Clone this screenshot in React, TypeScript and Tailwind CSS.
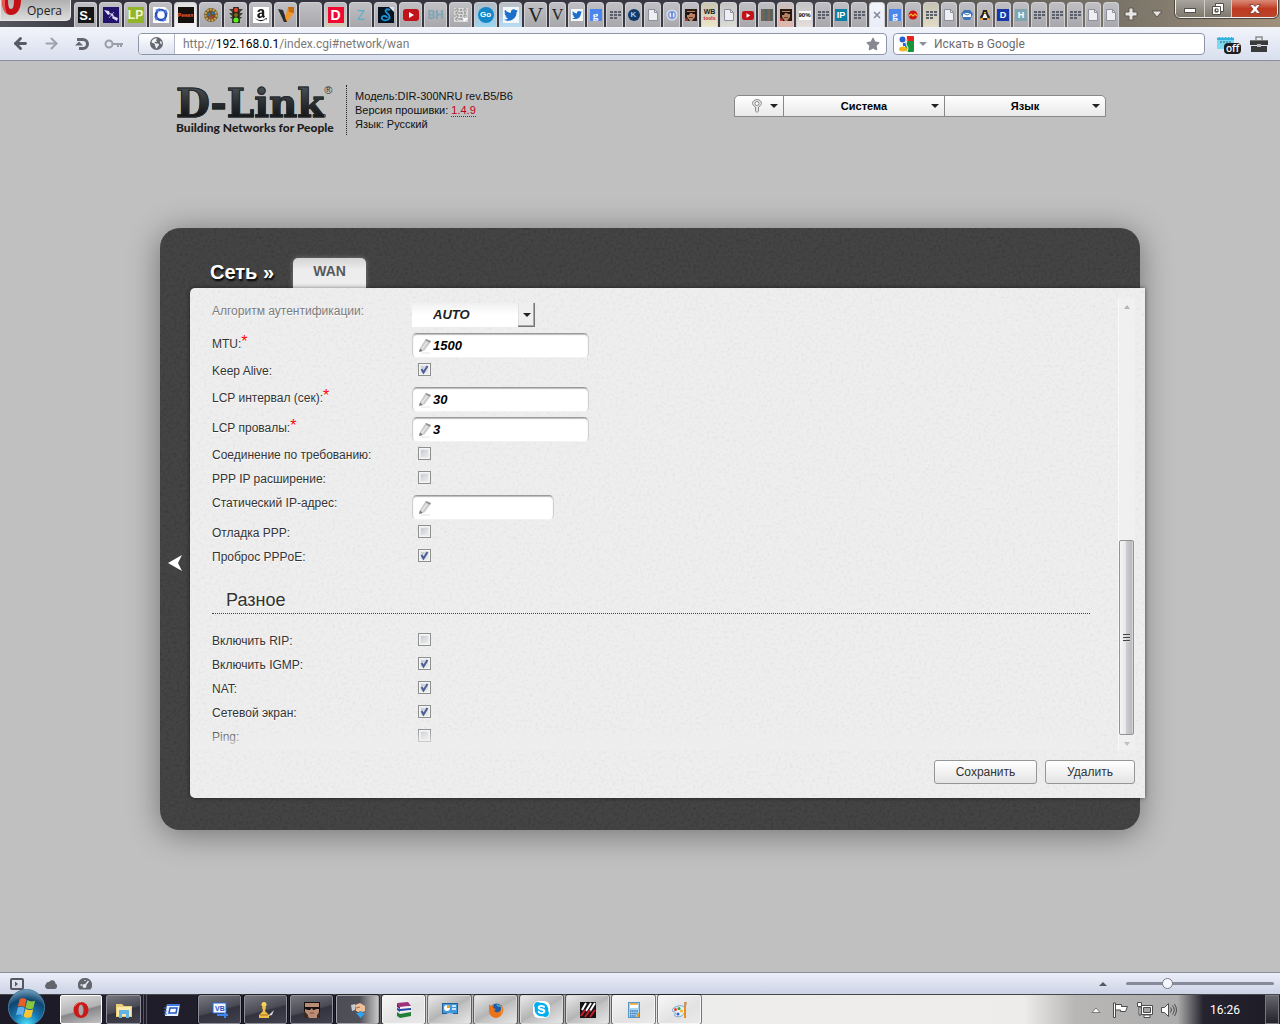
import { useState } from "react";
import type { ReactNode } from "react";
import { ArrowLeft, ArrowRight } from "lucide-react";
import { FaEarthAmericas, FaStar } from "react-icons/fa6";
import { FaAmazon, FaTwitter, FaSkype } from "react-icons/fa";

/* ---------- favicons ---------- */

function Letter({ children, look }: { children: ReactNode; look: string }) {
  return <span className={`flex shrink-0 items-center justify-center leading-none ${look}`}>{children}</span>;
}

function GridMark() {
  return (
    <svg className="size-3 shrink-0" viewBox="0 0 12 12" fill="#5b5e6b">
      {[2, 5, 8].map((y) =>
        [1, 5, 9].map((x) => (y === 8 && x === 9 ? null : <rect key={`${x}-${y}`} x={x} y={y} width="3" height="2" />)),
      )}
    </svg>
  );
}

function PageMark() {
  return (
    <svg className="size-3 shrink-0" viewBox="0 0 12 12">
      <path d="M1.500 .5h6l3 3v8h-9z" fill="#eceef2" stroke="#8d909c" />
      <path d="M7.500 .5v3h3" fill="none" stroke="#8d909c" />
    </svg>
  );
}

function YouTubeMark({ wide }: { wide?: boolean }) {
  return (
    <svg className={wide ? "h-3 w-4 shrink-0" : "h-[9px] w-3 shrink-0"} viewBox="0 0 16 12">
      <rect width="16" height="12" rx="3" fill="#c0141a" />
      <path d="M6 3l5 3-5 3z" fill="#fff" />
    </svg>
  );
}

function FaceMark() {
  return (
    <svg className="size-3 shrink-0" viewBox="0 0 12 12">
      <rect width="12" height="12" fill="#2a1a14" />
      <path d="M2 2h8v6l-3 4H5L2 8z" fill="#b98263" />
      <path d="M1 3h10v2H8L7 4H5L4 6H2z" fill="#1a1210" />
      <path d="M4 8h4v1H4z" fill="#6a3a2a" />
      <path d="M0 9l3 1v2H0z" fill="#a33" />
    </svg>
  );
}

function SwirlMark() {
  return (
    <svg className="size-4 shrink-0" viewBox="0 0 16 16">
      <path d="M0 0h12l4 4v12H0z" fill="#fff" />
      <circle cx="8" cy="8" r="5" fill="none" stroke="#2850b8" strokeWidth="2.500" />
      <path d="M2 3l5-2-2 4zM14 13l-5 2 2-4zM13 2l2 5-4-2zM3 14L1 9l4 2z" fill="#4c7ae0" />
      <path d="M5 5a5 5 0 016 0" fill="none" stroke="#c5d6ff" />
    </svg>
  );
}

function SatelliteMark() {
  return (
    <svg className="size-4 shrink-0" viewBox="0 0 16 16">
      <rect width="16" height="16" fill="#23126b" />
      <path d="M1 3l5 1 1 3-2 1zM7 6l3 1 1 3-3-1zM10 9l5 2-1 3-5-3z" fill="#dcdcf2" />
      <path d="M11 5l-5 6" stroke="#a9a6d8" />
    </svg>
  );
}

function TrafficMark() {
  return (
    <svg className="size-4 shrink-0" viewBox="0 0 16 16">
      <path d="M1 2h14l-3 3v1h3l-3 3v1h2l-2 2v4H4v-4l-2-2h2V9L1 6h3V5z" fill="#3b3d33" />
      <rect x="5" width="6" height="16" rx="1" fill="#23251e" />
      <circle cx="8" cy="3" r="2.200" fill="#e3402a" />
      <circle cx="8" cy="8" r="2" fill="#806514" />
      <circle cx="8" cy="13" r="2.600" fill="#55f01c" />
    </svg>
  );
}

function WreathMark() {
  return (
    <svg className="size-4 shrink-0" viewBox="0 0 16 16">
      <circle cx="8" cy="8" r="7" fill="#6b5531" />
      <circle cx="8" cy="8" r="5.500" fill="none" stroke="#cda94c" strokeWidth="2" strokeDasharray="2 1" />
      <path d="M4 6h3v3H4zM9 5h3v2H9z" fill="#3c6d9c" />
      <path d="M6 9h4v3H6z" fill="#a4483b" />
    </svg>
  );
}

function CheckLogo() {
  return (
    <svg className="size-4 shrink-0" viewBox="0 0 16 16">
      <path d="M0 2l5 1 4 12H6z" fill="#2c2c2c" />
      <path d="M10 0h6v6L9 15H6z" fill="#f0962c" />
      <path d="M10 0h6v6l-5-1z" fill="#c86c10" />
      <path d="M5 6l4 9H6z" fill="#2c2c2c" />
    </svg>
  );
}

function SnakeMark() {
  return (
    <svg className="size-4 shrink-0" viewBox="0 0 16 16">
      <rect width="16" height="16" fill="#07131f" />
      <path d="M12 3c-4-2-6 1-3 3s4 6 0 7-6-1-5-3 5-1 5 1" fill="none" stroke="#1a93d8" strokeWidth="1.800" />
      <path d="M11 0h5v5z" fill="#dfe6ea" />
    </svg>
  );
}

function NoiseMark() {
  return (
    <svg className="size-4 shrink-0" viewBox="0 0 16 16">
      <rect x="1" y="1" width="14" height="14" fill="#dadada" />
      <path d="M1 3h13M2 6h12M1 9h13M2 12h9M4 1v13M8 2v12M12 1v11" stroke="#888" strokeDasharray="2 1" />
      <path d="M10 11h5l-4 4z" fill="#fff" />
    </svg>
  );
}

function BirdMark({ large }: { large?: boolean }) {
  return (
    <span className={`flex shrink-0 items-center justify-center bg-[#f4f7f8] ${large ? "size-4" : "size-3"}`}>
      <FaTwitter className={large ? "size-3.5 text-[#1c6ecb]" : "size-2.5 text-[#1c6ecb]"} />
    </span>
  );
}

function RingMark() {
  return (
    <svg className="size-3 shrink-0" viewBox="0 0 12 12">
      <circle cx="6" cy="6" r="5.500" fill="#e6edfc" />
      <circle cx="6" cy="6" r="3.500" fill="none" stroke="#8ea4dc" strokeWidth="2" />
      <path d="M6 3v6" stroke="#5776c8" strokeWidth="1.500" />
    </svg>
  );
}

function StripesMark() {
  return (
    <svg className="size-3 shrink-0" viewBox="0 0 12 12">
      <rect width="12" height="12" fill="#5c6a58" />
      <path d="M2 0v12M8 0v12" stroke="#8b5d4c" strokeWidth="1.500" />
      <path d="M5 0v12M10.500 0v12" stroke="#4f6078" strokeWidth="1.500" />
    </svg>
  );
}

function RedBallMark() {
  return (
    <svg className="size-3 shrink-0" viewBox="0 0 12 12">
      <circle cx="6" cy="6" r="4.500" fill="#cf1610" />
      <path d="M2 7l2-2 2 2 2-2 2 2" stroke="#f4b03c" strokeWidth="1.200" fill="none" />
    </svg>
  );
}

function MailMark() {
  return (
    <svg className="size-3 shrink-0" viewBox="0 0 12 12">
      <path d="M3 1h6l3 4-3 6H3L0 5z" fill="#3c74b8" />
      <path d="M2 4h8v4H2z" fill="#fff" />
      <path d="M2 4l4 2 4-2" stroke="#3c74b8" fill="none" />
    </svg>
  );
}

function PenguinMark() {
  return (
    <svg className="size-3 shrink-0" viewBox="0 0 12 12">
      <path d="M4 1h4l1 4 2 3-1 3H2L1 8l2-3z" fill="#222" />
      <path d="M5 5h2l1.500 4h-5z" fill="#fff" />
      <path d="M5 3h2v1.500H5zM2 9h2v2H1zM8 9h2l1 2H8z" fill="#f1a21c" />
      <path d="M2 1l1 2M10 1L9 3" stroke="#e9c54a" />
    </svg>
  );
}

type TabInfo = { name: string; icon: ReactNode; glow?: string };

const serifV = "font-['Liberation_Serif'] text-[#222]";
const google = <Letter look="size-3 bg-[#4a86ee] font-['Liberation_Serif'] text-[11px] font-bold text-white">g</Letter>;

const wideTabs: TabInfo[] = [
  { name: "S", icon: <Letter look="size-4 bg-[#151515] text-[13px] font-bold text-white">S.</Letter> },
  { name: "Satellite", icon: <SatelliteMark /> },
  { name: "LP", icon: <Letter look="size-4 bg-[#93b52c] text-[12px] font-bold text-[#f0f6d8]">LP</Letter> },
  { name: "Swirl", icon: <SwirlMark /> },
  {
    name: "News",
    icon: <Letter look="size-4 bg-[#16100c] text-[5px] font-bold text-[#ff5a2c]">Pенил</Letter>,
    glow: "from-[#e0e0e0] to-[#f4f4f4]",
  },
  { name: "Wreath", icon: <WreathMark /> },
  { name: "Traffic", icon: <TrafficMark /> },
  {
    name: "Amazon",
    icon: (
      <span className="flex size-4 shrink-0 items-center justify-center bg-white">
        <FaAmazon className="size-3.5 text-[#1b1b1b]" />
      </span>
    ),
  },
  { name: "Check", icon: <CheckLogo /> },
  { name: "Blank", icon: null },
  {
    name: "D",
    icon: <Letter look="size-4 bg-[#f00a32] text-[14px] font-bold text-white">D</Letter>,
    glow: "from-[#bababf] to-[#d3cdb4]",
  },
  { name: "Z", icon: <Letter look="size-4 font-['DejaVu_Sans_Mono'] text-[14px] text-[#5cb0cc]">Z</Letter> },
  { name: "Snake", icon: <SnakeMark /> },
  { name: "Video", icon: <YouTubeMark wide /> },
  { name: "BH", icon: <Letter look="size-4 font-['Roboto'] text-[12px] font-bold text-[#7fa5b3]">BH</Letter> },
  { name: "Noise", icon: <NoiseMark /> },
  {
    name: "Go",
    icon: <Letter look="size-4 rounded-full bg-[#1488c8] text-[8px] font-bold text-white">Go</Letter>,
    glow: "from-[#b4bcc4] to-[#9cd4f0]",
  },
  { name: "Twitter", icon: <BirdMark large />, glow: "from-[#b8bec6] to-[#b6dcf4]" },
  { name: "V", icon: <Letter look={`size-4 text-[21px] ${serifV}`}>V</Letter> },
];

const mediumTabs: TabInfo[] = [
  { name: "V", icon: <Letter look={`size-3 text-[16px] ${serifV}`}>V</Letter> },
  { name: "Twitter", icon: <BirdMark /> },
  { name: "Google", icon: google },
  { name: "Grid", icon: <GridMark /> },
  { name: "K", icon: <Letter look="size-3 rounded-full bg-[#123a68] text-[8px] font-bold text-[#9fd0f5]">K</Letter> },
  { name: "Page", icon: <PageMark /> },
  { name: "Ring", icon: <RingMark /> },
  { name: "Face", icon: <FaceMark /> },
  {
    name: "WB",
    icon: (
      <span className="flex size-3 shrink-0 flex-col items-center justify-center text-[7px] leading-[6px] font-bold text-[#222]">
        WB<span className="text-[5px] text-[#d01818]">tools</span>
      </span>
    ),
    glow: "from-[#c9c6b0] to-[#ece6cc]",
  },
  { name: "Page", icon: <PageMark />, glow: "from-[#c4c4c4] to-[#dcdcd6]" },
  { name: "Video", icon: <YouTubeMark /> },
  { name: "Stripes", icon: <StripesMark /> },
  { name: "Face", icon: <FaceMark />, glow: "from-[#c8c0c0] to-[#dcb8ac]" },
  {
    name: "Sale",
    icon: <Letter look="h-[9px] w-3 overflow-hidden bg-white text-[6px] font-bold text-black">90%</Letter>,
    glow: "from-[#c4c4c4] to-[#e6dedc]",
  },
];

const narrowTabs: TabInfo[] = [
  { name: "Grid", icon: <GridMark /> },
  { name: "IP", icon: <Letter look="size-3 bg-[#0f7fa8] text-[9px] font-bold text-white">IP</Letter> },
  { name: "Grid", icon: <GridMark /> },
  {
    name: "WAN",
    icon: (
      <svg className="size-2 shrink-0" viewBox="0 0 8 8">
        <path d="M1 1l6 6M7 1L1 7" stroke="#83889c" strokeWidth="1.600" />
      </svg>
    ),
    glow: "from-[#f2f4fb] to-[#e9edf7]",
  },
  { name: "Google", icon: google },
  { name: "Ball", icon: <RedBallMark /> },
  { name: "Grid", icon: <GridMark />, glow: "from-[#c6c3b2] to-[#e0dcc6]" },
  { name: "Page", icon: <PageMark /> },
  { name: "Mail", icon: <MailMark /> },
  { name: "Penguin", icon: <PenguinMark /> },
  { name: "D", icon: <Letter look="size-3 bg-[#1638a8] text-[9px] font-bold text-white">D</Letter> },
  { name: "H", icon: <Letter look="size-3 bg-[#7fa6b0] text-[9px] font-bold text-white">H</Letter> },
  { name: "Grid", icon: <GridMark /> },
  { name: "Grid", icon: <GridMark /> },
  { name: "Grid", icon: <GridMark /> },
  { name: "Page", icon: <PageMark /> },
  { name: "Page", icon: <PageMark /> },
];

function Tabs({ tabs, width }: { tabs: TabInfo[]; width: string }) {
  return (
    <>
      {tabs.map((tab, i) => (
        <button
          key={i}
          aria-label={tab.name}
          className={`flex h-[25px] shrink-0 items-center justify-center overflow-hidden rounded-t-[4px] border border-b-0 border-[#d0d0d4] bg-gradient-to-b ${tab.glow ?? "from-[#c0c0c4] to-[#a8a8ac]"} ${width}`}
        >
          {tab.icon}
        </button>
      ))}
    </>
  );
}

function TabBar() {
  return (
    <div className="flex h-[27px] bg-[linear-gradient(90deg,#55565e_0%,#33333d_8%,#3a3a44_60%,#5c5a56_75%,#80796c_90%,#a0917c_100%)]">
      <button className="flex h-[21px] w-[71px] shrink-0 items-start gap-1 rounded-br-[5px] border border-t-0 border-[#e6e6e6] bg-gradient-to-b from-[#b0b0b0] to-[#dcdcdc] font-['Open_Sans'] text-[12px] leading-[21px] text-[#222]">
        <svg className="h-4 w-[22px] shrink-0" viewBox="0 0 22 16">
          <path d="M1 0c0 9 3 15 9 15s10-6 10-15h-7c0 6-1 9-3 9S7 6 7 0z" fill="#c31217" />
          <path d="M1 0c0 8 2 13 6 14.500C4 11 4 6 4 0z" fill="#ea5a58" />
        </svg>
        Opera
      </button>
      <div className="ml-[3px] flex min-w-0 items-end gap-[2px] overflow-hidden">
        <Tabs tabs={wideTabs} width="w-[23px]" />
        <Tabs tabs={mediumTabs} width="w-[17px]" />
        <Tabs tabs={narrowTabs} width="w-4" />
      </div>
      <div className="flex items-center gap-3 pl-1">
        <button aria-label="Новая вкладка">
          <svg className="size-4" viewBox="0 0 16 16">
            <path d="M6 2h4v4h4v4h-4v4H6v-4H2V6h4z" fill="#e6e6e6" stroke="#5e584d" />
          </svg>
        </button>
        <button aria-label="Список вкладок">
          <svg className="h-2 w-3" viewBox="0 0 12 8">
            <path d="M1 1h10L6 7z" fill="#e6e6e6" stroke="#5e584d" />
          </svg>
        </button>
      </div>
      <div className="mr-[2px] ml-auto flex h-[18px] overflow-hidden rounded-b-[5px] border border-t-0 border-[#f0f0f0] outline outline-[#4b463f]">
        <button aria-label="Свернуть" className="flex w-[28px] items-center justify-center bg-gradient-to-b from-[#a9a59f] to-[#7d776c]">
          <svg className="h-2.5 w-3" viewBox="0 0 12 10">
            <rect x="0.500" y="4.500" width="11" height="4" fill="#fff" stroke="#55504a" />
          </svg>
        </button>
        <button aria-label="Развернуть" className="flex w-[27px] items-center justify-center border-l border-[#cfccc6] bg-gradient-to-b from-[#a9a59f] to-[#7d776c]">
          <svg className="size-3" viewBox="0 0 12 12">
            <path d="M3.500 0.500h8v8h-8z" fill="#fff" stroke="#55504a" />
            <path d="M0.500 3.500h8v8h-8zM3 6h3v3H3z" fill="#fff" fillRule="evenodd" stroke="#55504a" />
          </svg>
        </button>
        <button aria-label="Закрыть" className="flex w-[46px] items-center justify-center border-l border-[#cfccc6] bg-gradient-to-b from-[#d98b78] via-[#c03a22] to-[#b8452a]">
          <svg className="h-2.5 w-3" viewBox="0 0 12 10">
            <path d="M0.500 0.500h3.500l2 2 2-2h3.500L8 5l3.500 4.500H8l-2-2-2 2H0.500L4 5z" fill="#fff" stroke="#70362c" strokeWidth="0.800" />
          </svg>
        </button>
      </div>
    </div>
  );
}

/* ---------- address bar ---------- */

function Toolbar() {
  return (
    <div className="flex h-[34px] items-center border-b border-[#8b8f9c] bg-gradient-to-b from-[#f2f4fb] to-[#d9dfee] font-['Roboto'] text-[12px]">
      <div className="flex w-[138px] shrink-0 items-center gap-[14px] pl-3 text-[#585b63]">
        <button aria-label="Назад">
          <ArrowLeft className="size-[17px]" strokeWidth={4} />
        </button>
        <button aria-label="Вперёд" className="text-[#a0a3ab]">
          <ArrowRight className="size-[17px]" strokeWidth={3} />
        </button>
        <button aria-label="Обновить">
          <svg className="size-4" viewBox="0 0 16 16" fill="none">
            <path d="M3 3.500h6a4.500 4.500 0 010 9H5" stroke="#63666e" strokeWidth="3" />
            <path d="M1 9.500h8L5 5.500z" fill="#63666e" />
          </svg>
        </button>
        <button aria-label="Пароли">
          <svg className="h-3 w-5" viewBox="0 0 20 12" fill="none" stroke="#9b9ea6" strokeWidth="2">
            <circle cx="5" cy="6" r="3.500" />
            <path d="M9 6h10M14 6v3M17 6v3" />
          </svg>
        </button>
      </div>
      <div className="flex h-[22px] min-w-0 flex-1 items-center rounded-[4px] border border-[#8f95a8] bg-white">
        <span className="flex h-full w-9 shrink-0 items-center justify-center rounded-l-[3px] border-r border-[#b3b8c6] bg-gradient-to-b from-white to-[#dde2ee]">
          <FaEarthAmericas className="size-[13px] text-[#65686f]" />
        </span>
        <span className="flex-1 truncate pl-2 text-[#7a7a7a]">
          http://<span className="text-black">192.168.0.1</span>/index.cgi#network/wan
        </span>
        <button aria-label="Закладка" className="pr-1.5">
          <FaStar className="size-[14px] text-[#858890]" />
        </button>
      </div>
      <label className="ml-1.5 flex h-[22px] w-[312px] shrink-0 items-center rounded-[4px] border border-[#8f95a8] bg-white">
        <svg className="ml-1 size-4" viewBox="0 0 16 16">
          <rect width="16" height="16" fill="#fff" />
          <path d="M9 0h6a1 1 0 011 1v4H8z" fill="#e8221c" />
          <path d="M8 5h8v10a1 1 0 01-1 1H9l-2-6z" fill="#15963c" />
          <circle cx="4.500" cy="3.500" r="3" fill="#2a5fd0" />
          <path d="M5 7h3v3H5z" fill="#2a5fd0" />
          <ellipse cx="5" cy="13" rx="4" ry="2.500" fill="#f3b41c" />
          <path d="M7 0l2 4-1 4 2 4-1 4" stroke="#fff" fill="none" />
        </svg>
        <svg className="ml-[5px] h-1.5 w-2" viewBox="0 0 8 6">
          <path d="M0 1h8L4 5z" fill="#8d8f96" />
        </svg>
        <input
          aria-label="Поиск"
          placeholder="Искать в Google"
          className="ml-[7px] min-w-0 flex-1 bg-transparent outline-none placeholder:text-[#6b6b6b]"
        />
      </label>
      <div className="flex w-[75px] shrink-0 items-center gap-2 pl-[11px]">
        <button aria-label="Расширение" className="relative">
          <svg className="h-5 w-[26px]" viewBox="0 0 26 20">
            <path d="M1 3h17v12H1z" fill="#7fd8f2" />
            <path d="M1 3h17v3H1z" fill="#35b2dc" />
            <path d="M2 2v2M5 2v2M8 2v2M11 2v2M14 2v2M17 2v2" stroke="#fff" />
            <path d="M4 8h11" stroke="#28607a" strokeDasharray="2 1" />
          </svg>
          <span className="absolute top-[9px] left-2 rounded-[4px] bg-[#1d1d1d] px-[2px] font-['Open_Sans'] text-[10px] leading-[11px] font-semibold text-white">
            off
          </span>
        </button>
        <button aria-label="Инструменты">
          <svg className="h-4 w-[18px]" viewBox="0 0 18 16">
            <path d="M6 4V1h6v3" fill="none" stroke="#8d8d8d" strokeWidth="1.500" />
            <path d="M0 4h18v5H0zM1 10h16v6H1z" fill="#3a3a3a" />
            <path d="M0 4h18v1H0z" fill="#777" />
            <rect x="7" y="8" width="4" height="3" fill="#bbb" />
          </svg>
        </button>
      </div>
    </div>
  );
}

/* ---------- router page ---------- */

function SiteHeader() {
  return (
    <header className="flex items-start pl-4">
      <div className="w-[158px]">
        <div className="flex items-start">
          <span className="bg-gradient-to-b from-[#4d5458] to-[#0c0d0f] bg-clip-text font-['DejaVu_Serif'] text-[39px] leading-[37px] font-bold text-transparent [-webkit-text-stroke:1px_#24282a]">
            D-Link
          </span>
          <span className="text-[11px] leading-[11px] text-[#333]">®</span>
        </div>
        <div className="font-['Lato'] text-[12px] leading-[12px] font-black whitespace-nowrap text-[#1d1d1d]">Building Networks for People</div>
      </div>
      <div className="ml-3 h-[50px] border-l border-dotted border-[#222] pt-1 pl-2 text-[11px] leading-[14px] text-[#111]">
        <div>Модель:DIR-300NRU rev.B5/B6</div>
        <div>
          Версия прошивки:{" "}
          <a href="#version" className="border-b border-dotted border-[#c00020] text-[#c00020]">
            1.4.9
          </a>
        </div>
        <div>Язык: Русский</div>
      </div>
      <nav className="mt-2.5 mr-[34px] ml-auto flex h-[22px] overflow-hidden rounded-t-[5px] border border-[#888] bg-gradient-to-b from-white to-[#e9e9e9] text-[11px] font-bold text-black">
        <button aria-label="Подсказки" className="flex w-[49px] items-center justify-end gap-2 border-r border-[#888] pr-[5px]">
          <svg className="h-[14px] w-[10px]" viewBox="0 0 10 14" fill="none" stroke="#8b8b8b">
            <path d="M3.500 8C1 6.500 .5 5 .5 4.500a4.500 4 0 019 0c0 .5-.5 2-3 3.500v4l-1.500 1.500L3.500 12z" fill="#e4e4e4" />
            <circle cx="5" cy="4.500" r="2" fill="#fff" />
          </svg>
          <Caret />
        </button>
        <button className="flex w-[161px] items-center border-r border-[#888] pr-[5px] pl-[13px]">
          <span className="flex-1">Система</span>
          <Caret />
        </button>
        <button className="flex w-40 items-center pr-[5px] pl-[13px]">
          <span className="flex-1">Язык</span>
          <Caret />
        </button>
      </nav>
    </header>
  );
}

function Caret() {
  return (
    <svg className="h-1 w-2 shrink-0" viewBox="0 0 8 4">
      <path d="M0 0h8L4 4z" fill="#222" />
    </svg>
  );
}

function Texture({ id, tone }: { id: string; tone: string }) {
  return (
    <svg aria-hidden="true" className={`pointer-events-none absolute inset-0 size-full rounded-[inherit] ${tone}`}>
      <filter id={id}>
        <feTurbulence type="fractalNoise" baseFrequency="0.35" numOctaves="2" stitchTiles="stitch" />
        <feColorMatrix values="0 0 0 0 0  0 0 0 0 0  0 0 0 0 0  1.6 0 0 0 -0.7" />
      </filter>
      <rect width="100%" height="100%" filter={`url(#${id})`} />
    </svg>
  );
}

function CheckBox({ id, on }: { id: string; on?: boolean }) {
  const [checked, setChecked] = useState(!!on);
  return (
    <span className="relative mt-[3px] ml-1.5 block size-[13px]">
      <input
        id={id}
        type="checkbox"
        checked={checked}
        onChange={() => setChecked(!checked)}
        className="block size-[13px] appearance-none border border-[#8e8f8f] bg-[linear-gradient(135deg,#bcc1ca,#f6f6f6)] bg-clip-content p-[2px] [box-shadow:inset_0_0_0_1px_#f4f4f4]"
      />
      {checked && (
        <svg className="pointer-events-none absolute inset-0 size-[13px]" viewBox="0 0 13 13">
          <path d="M3.500 6l2 3.500L9.500 3" fill="none" stroke="#4a5f97" strokeWidth="2" />
        </svg>
      )}
    </span>
  );
}

function TextBox({ id, value, width }: { id: string; value: string; width: string }) {
  return (
    <span className={`relative mt-[3px] block h-[25px] ${width}`}>
      <input
        id={id}
        defaultValue={value}
        className="h-[25px] w-full rounded-[5px] border border-[#d0d0d0] border-t-[#9a9a9a] border-b-[#f2f2f2] bg-white pl-5 text-[13px] font-bold text-black italic shadow-[inset_0_1px_1px_#bbb] outline-none"
      />
      <svg className="pointer-events-none absolute top-[5px] left-1.5 size-4" viewBox="0 0 16 16">
        <path d="M1 14l1-4 3 3z" fill="#777" />
        <path d="M2 10L7 2l5 3-6 8z" fill="#cbcbcb" />
        <path d="M4 11l5-7" stroke="#e6e6e6" strokeWidth="1.500" />
        <path d="M7 2l1-1 5 2-1 2z" fill="#8f8f8f" />
        <path d="M3 15h9" stroke="#e4e4e4" />
      </svg>
    </span>
  );
}

type Row = { id: string; label: string; on?: boolean; value?: string; required?: boolean; width?: string };

const pppRows: Row[] = [
  { id: "mtu", label: "MTU:", value: "1500", required: true, width: "w-[177px]" },
  { id: "keepalive", label: "Keep Alive:", on: true },
  { id: "lcpint", label: "LCP интервал (сек):", value: "30", required: true, width: "w-[177px]" },
  { id: "lcpfail", label: "LCP провалы:", value: "3", required: true, width: "w-[177px]" },
  { id: "ondemand", label: "Соединение по требованию:" },
  { id: "ipext", label: "PPP IP расширение:" },
  { id: "staticip", label: "Статический IP-адрес:", value: "", width: "w-[142px]" },
  { id: "debug", label: "Отладка PPP:" },
  { id: "pppoe", label: "Проброс PPPoE:", on: true },
];

const miscRows: Row[] = [
  { id: "rip", label: "Включить RIP:" },
  { id: "igmp", label: "Включить IGMP:", on: true },
  { id: "nat", label: "NAT:", on: true },
  { id: "firewall", label: "Сетевой экран:", on: true },
  { id: "ping", label: "Ping:" },
];

function FormRow({ row }: { row: Row }) {
  const isText = row.value !== undefined;
  return (
    <div className={`flex items-start ${isText ? "h-[30px]" : "h-6"}`}>
      <label htmlFor={row.id} className={`flex w-[200px] leading-[14px] ${row.required ? "pt-[7px]" : "pt-1"}`}>
        {row.label}
        {row.required && <span className="-mt-0.5 text-[16px] leading-[14px] text-[#ff0000]">*</span>}
      </label>
      {isText ? <TextBox id={row.id} value={row.value ?? ""} width={row.width ?? ""} /> : <CheckBox id={row.id} on={row.on} />}
    </div>
  );
}

function ScrollBar() {
  return (
    <div className="flex w-[17px] shrink-0 flex-col items-start border-l border-[#f8f8f8] bg-[#f0f0f0] pt-[7px]">
      <svg className="ml-[5px] h-1 w-1.5" viewBox="0 0 6 4">
        <path d="M0 4h6L3 0z" fill="#b4b4b4" />
      </svg>
      <div className="flex-1" />
      <div className="flex h-[195px] w-[15px] flex-col items-center justify-center gap-px rounded-[2px] border border-[#929292] bg-[linear-gradient(90deg,#f6f6f6_0%,#e6e6e8_45%,#cbccd0_50%,#bcbcc0_90%,#e4e4e4_100%)]">
        <span className="h-0.5 w-[7px] border-t border-[#444] bg-[#ddd]" />
        <span className="h-0.5 w-[7px] border-t border-[#444] bg-[#ddd]" />
        <span className="h-0.5 w-[7px] border-t border-[#444] bg-[#ddd]" />
      </div>
      <svg className="mt-[7px] mb-1 ml-[5px] h-1 w-1.5" viewBox="0 0 6 4">
        <path d="M0 0h6L3 4z" fill="#c0c0c0" />
      </svg>
    </div>
  );
}

function Panel() {
  return (
    <main className="relative mt-[93px] rounded-[20px] bg-[#444] pt-[30px] pb-8 shadow-[0_4px_32px_rgba(0,0,0,0.42)]">
      <Texture id="grain-dark" tone="opacity-20" />
      <div className="relative flex h-[30px] items-stretch pl-[50px]">
        <h1 className="text-[20px] leading-[28px] font-bold text-white [text-shadow:1px_2px_2px_#000]">Сеть »</h1>
        <a
          href="#wan"
          className="ml-[19px] flex w-[73px] justify-center rounded-t-[5px] bg-gradient-to-b from-[#d4d4d4] to-[#ededed] to-40% text-[14px] leading-[27px] font-bold text-[#585858] shadow-[0_0_5px_rgba(255,255,255,0.3)]"
        >
          WAN
        </a>
      </div>
      <div className="relative flex">
        <button aria-label="Назад" className="flex w-[30px] shrink-0 items-center justify-center pt-10">
          <svg className="h-4 w-[14px]" viewBox="0 0 14 16">
            <path d="M0 8L14 0l-4 8 4 8z" fill="#fff" />
          </svg>
        </button>
        <section className="relative -mr-[5px] min-w-0 flex-1 rounded-l-[5px] bg-[#eeeeee] pt-2.5 pr-2.5 pb-[14px] shadow-[0_0_4px_rgba(0,0,0,0.5)]">
          <Texture id="grain-light" tone="opacity-[0.05]" />
          <div className="relative flex">
            <form className="relative mr-7 min-w-0 flex-1 pt-0.5 pl-[22px] text-[12px] text-[#333] [text-shadow:0_1px_0_#fff]">
              <div className="flex h-[30px] items-start">
                <label htmlFor="auth" className="w-[200px] pt-1 leading-[14px] text-[#7b7b7b]">
                  Алгоритм аутентификации:
                </label>
                <span className="relative mt-[3px] block h-6 w-[123px] bg-gradient-to-b from-[#f0f0f0] to-white to-50%">
                  <select id="auth" className="h-6 w-full appearance-none bg-transparent pl-[21px] text-[13px] font-bold text-[#222] italic outline-none">
                    <option>AUTO</option>
                  </select>
                  <span className="pointer-events-none absolute top-0 right-0 flex h-6 w-[17px] items-center justify-center bg-[#efefef] shadow-[inset_-1px_-1px_0_#777,inset_-2px_-2px_0_#a8a8a8,inset_1px_0_0_#e0e0e0]">
                    <Caret />
                  </span>
                </span>
              </div>
              {pppRows.map((row) => (
                <FormRow key={row.id} row={row} />
              ))}
              <h2 className="mt-5 mb-4 h-6 border-b border-dotted border-[#444] pl-[14px] text-[18px] leading-5 text-[#333]">Разное</h2>
              {miscRows.map((row) => (
                <FormRow key={row.id} row={row} />
              ))}
              <span className="pointer-events-none absolute inset-x-0 bottom-0 h-[22px] bg-gradient-to-b from-[#eeeeee]/0 to-[#eeeeee]" />
            </form>
            <ScrollBar />
          </div>
          <div className="relative mt-2.5 flex justify-end gap-2 text-[12px] text-[#333]">
            <button className="h-6 w-[103px] rounded-[3px] border border-[#969696] bg-gradient-to-b from-white to-[#e4e4e4]">Сохранить</button>
            <button className="h-6 w-[90px] rounded-[3px] border border-[#969696] bg-gradient-to-b from-white to-[#e4e4e4]">Удалить</button>
          </div>
        </section>
      </div>
    </main>
  );
}

/* ---------- status bar and taskbar ---------- */

function StatusBar() {
  return (
    <div className="flex h-[22px] items-center border-t border-[#8b8f9c] bg-gradient-to-b from-[#eceffa] to-[#ccd3e5] px-1.5 text-[#565860]">
      <div className="flex items-center gap-5 pl-1">
        <button aria-label="Панели">
          <svg className="h-3 w-[14px]" viewBox="0 0 14 12">
            <rect x="1" y="1" width="12" height="10" rx="1" fill="none" stroke="#565860" strokeWidth="2" />
            <path d="M5 3.500v5L8 6z" fill="#565860" />
          </svg>
        </button>
        <button aria-label="Opera Link">
          <svg className="h-[11px] w-[14px]" viewBox="0 0 14 11">
            <path d="M3 11a3 3 0 01-1-5 2.500 2.500 0 013-2 3.500 3.500 0 016.500 1.500A3 3 0 0111 11z" fill="#63656d" />
          </svg>
        </button>
        <button aria-label="Opera Turbo">
          <svg className="h-3 w-[14px]" viewBox="0 0 14 12">
            <path d="M7 0a7 7 0 00-5.500 11.500h11A7 7 0 007 0z" fill="#63656d" />
            <path d="M7 7.500L10.500 3M2.500 7h2M7 2v1" stroke="#e3e7f2" strokeWidth="1.500" />
            <circle cx="6.500" cy="8" r="2" fill="#e3e7f2" />
          </svg>
        </button>
      </div>
      <svg className="mr-[19px] ml-auto h-1 w-2" viewBox="0 0 8 4">
        <path d="M0 4h8L4 0z" fill="#565860" />
      </svg>
      <input
        type="range"
        aria-label="Масштаб"
        defaultValue={26}
        className="h-3 w-[148px] appearance-none bg-transparent [&::-webkit-slider-runnable-track]:h-[3px] [&::-webkit-slider-runnable-track]:rounded-full [&::-webkit-slider-runnable-track]:bg-[#878b99] [&::-webkit-slider-thumb]:-mt-1 [&::-webkit-slider-thumb]:size-[11px] [&::-webkit-slider-thumb]:appearance-none [&::-webkit-slider-thumb]:rounded-full [&::-webkit-slider-thumb]:border [&::-webkit-slider-thumb]:border-[#777a86] [&::-webkit-slider-thumb]:bg-[#f6f8fd]"
      />
    </div>
  );
}

type Task = { name: string; icon: ReactNode; look: string };

const dark = "border-[#8e8e98] bg-[linear-gradient(165deg,#77777f_0%,#4a4a55_50%,#33333f_55%,#42424e_100%)]";
const mixed = "border-[#d8d8d8] bg-[linear-gradient(150deg,#e9e9e9_0%,#b4b4b4_50%,#c0c0c0_55%,#e6e6e6_100%)]";
const pale = "border-[#f6f6f6] bg-[linear-gradient(150deg,#f6f6f6_0%,#e2e2e2_60%,#eceaea_100%)]";

const tasks: Task[] = [
  {
    name: "Visual Basic",
    look: dark,
    icon: (
      <svg className="size-4" viewBox="0 0 16 16">
        <rect x="1" y="1" width="13" height="10" fill="#f3f7ff" stroke="#2b6ad2" />
        <text x="3" y="9" fontSize="7" fontWeight="bold" fontFamily="Liberation Sans" fill="#1c54be">
          VB
        </text>
        <path d="M5 13h6M13 11v5M11 13h5" stroke="#3f86ec" strokeWidth="2" />
      </svg>
    ),
  },
  {
    name: "Chess",
    look: dark,
    icon: (
      <svg className="size-4" viewBox="0 0 16 16">
        <circle cx="6" cy="2.500" r="2.500" fill="#f6d558" />
        <path d="M4 5h4l-1 4 4 4v3H1v-3l4-4z" fill="#eebe48" />
        <path d="M2 13h8" stroke="#aa6d15" />
        <path d="M16 8l-6 6 4-1z" fill="#dcdfe4" />
      </svg>
    ),
  },
  {
    name: "Photo",
    look: dark,
    icon: (
      <svg className="size-4" viewBox="0 0 16 16">
        <rect width="16" height="16" fill="#15100e" />
        <path d="M1 1h14v9l-2 6H5l-4-6z" fill="#b98d75" />
        <path d="M1 5h14v2h-3l-2 1H9L8 6 6 8H4L1 7z" fill="#171010" />
        <path d="M6 11h4" stroke="#7a4434" />
        <path d="M0 9l4 4v3H0zM16 10l-3 3v3h3z" fill="#3a2a24" />
      </svg>
    ),
  },
  {
    name: "Download",
    look: "border-[#a4a4a8] bg-[linear-gradient(90deg,#4d4d57_0%,#505059_55%,#c8c6c4_100%)]",
    icon: (
      <svg className="size-4" viewBox="0 0 16 16">
        <path d="M1 3l4-1v6l-3 1z" fill="#c6cbd0" />
        <path d="M5 3l5-2 5 3v5l-5 2-4-2z" fill="#efbf98" />
        <path d="M6 6l4-1" stroke="#a06c48" />
        <path d="M9 9h3v2h3l-4.500 5L6 11h3z" fill="#28a8f2" />
      </svg>
    ),
  },
  {
    name: "WinRAR",
    look: pale,
    icon: (
      <svg className="size-4" viewBox="0 0 16 16">
        <path d="M1 1l11-1 3 4-11 1z" fill="#a0307a" />
        <path d="M4 5l11-1v2L4 7z" fill="#f3f3f3" />
        <path d="M1 6l3 1 11-1v2L4 10 1 8z" fill="#2448a8" />
        <path d="M4 9l11-1v1.500L4 11z" fill="#f0f0f0" />
        <path d="M1 10l3 2 11-2v4L4 16l-3-2z" fill="#248038" />
        <path d="M1 1l3 4v2L1 5z" fill="#7b1f5b" />
      </svg>
    ),
  },
  {
    name: "Control panel",
    look: mixed,
    icon: (
      <svg className="size-4" viewBox="0 0 16 16">
        <rect x="0.500" y="1.500" width="15" height="10" fill="#3e9ade" stroke="#265f98" />
        <circle cx="5" cy="6" r="3" fill="#fff" />
        <path d="M5 6V3a3 3 0 013 3z" fill="#f09a20" />
        <path d="M10 4h4M10 7h4" stroke="#fff" strokeWidth="1.500" />
        <ellipse cx="8" cy="13" rx="4" ry="2" fill="#c4ccd4" />
      </svg>
    ),
  },
  {
    name: "Firefox",
    look: mixed,
    icon: (
      <svg className="size-4" viewBox="0 0 16 16">
        <circle cx="8.500" cy="8" r="6.500" fill="#1d5da8" />
        <path d="M8 3c2-1 4 0 5 2l-3-.500z" fill="#4cabe0" />
        <path d="M1 2l2 2 3-1-1 3 3 1-2 2c2 2 5 2 7-1 1-3 0-4-1-6 3 2 4 5 3 8s-4 6-7 6-7-3-7-7z" fill="#ec7318" />
        <path d="M12 3c3 3 3 7 0 10 2-3 2-6 0-10z" fill="#fbc22e" />
      </svg>
    ),
  },
  { name: "Skype", look: mixed, icon: <FaSkype className="size-[17px] rounded-[6px] bg-white text-[#00aff0]" /> },
  {
    name: "Stripes",
    look: mixed,
    icon: (
      <svg className="size-4" viewBox="0 0 16 16">
        <rect width="16" height="16" fill="#161314" />
        <path d="M2 8l4-7M6 9l5-8M10 9l5-8" stroke="#fff" strokeWidth="2" />
        <path d="M1 14l4-6M5 15l5-7M10 15l5-7" stroke="#c81a28" strokeWidth="2" />
      </svg>
    ),
  },
  {
    name: "Calculator",
    look: pale,
    icon: (
      <svg className="h-4 w-3" viewBox="0 0 12 16">
        <rect x="0.500" y="0.500" width="11" height="15" fill="#a8d4f2" stroke="#5a94c2" />
        <path d="M2 2h8v4H2z" fill="#fff" />
        <path d="M2 2h8" stroke="#f2a12a" strokeWidth="1.500" />
        <path d="M2 9h8M2 11.500h8M2 14h6" stroke="#3c7cb4" strokeDasharray="1.500 .6" strokeWidth="1.500" />
        <path d="M9 11h2v4H9z" fill="#f09a1c" />
      </svg>
    ),
  },
  {
    name: "Paint",
    look: pale,
    icon: (
      <svg className="size-4" viewBox="0 0 16 16">
        <path d="M6 4c4-1 8 1 7 5-1 5-6 7-10 5-1-1 1-3 0-4s-3 0-3-2c1-2 3-3 6-4z" fill="#e4f1fa" stroke="#72a6cc" />
        <circle cx="3.500" cy="7.500" r="1.500" fill="#e8382c" />
        <circle cx="7" cy="6.500" r="1.500" fill="#36a034" />
        <circle cx="9.500" cy="9" r="1.500" fill="#f4ba20" />
        <circle cx="6" cy="12" r="1.500" fill="#2d62ca" />
        <path d="M13 5v11" stroke="#ef8b22" strokeWidth="2" />
        <path d="M12 0h3l-1 5h-2z" fill="#c89464" />
      </svg>
    ),
  },
];

function TaskBar() {
  return (
    <footer className="relative flex h-[30px] items-stretch border-t border-[#47474c] bg-[linear-gradient(90deg,#1c1a26_0%,#23212e_28%,#8c8b8d_31%,#e4e2e1_34%,#9f9e9e_39%,#b0afaf_45%,#ededec_52%,#eeecea_80%,#b8b7b6_84%,#adacac_92%,#25232e_94%,#1d1b25_100%)]">
      <button
        aria-label="Пуск"
        className="absolute -top-1.5 left-2 size-[37px] overflow-hidden rounded-full border border-[#4a7fa4] bg-[radial-gradient(circle_at_50%_100%,#4fe4ff_0%,#1878b0_35%,#0f456f_65%,#9cc4dc_100%)]"
      >
        <svg className="mx-auto size-[23px]" viewBox="0 0 24 24">
          <path d="M5 3c3-1 5-1 7 1l-2 8c-2-2-4-2-7-1z" fill="#ea5d28" />
          <path d="M13 4c2 2 5 2 8 1l-2 8c-3 1-6 1-8-1z" fill="#8cc43c" />
          <path d="M3 12c3-1 5-1 7 1l-2 8c-2-2-4-2-7-1z" fill="#5cb0ec" />
          <path d="M11 13c2 2 5 2 8 1l-2 8c-3 1-6 1-8-1z" fill="#fcc630" />
        </svg>
      </button>
      <div className="flex shrink-0 pl-[60px]">
        <button
          aria-label="Opera"
          className="flex w-[42px] items-center justify-center rounded-[2px] border border-white bg-[linear-gradient(165deg,#ddd_0%,#b4b4b6_50%,#87878b_55%,#c2c2c4_100%)]"
        >
          <svg className="size-4" viewBox="0 0 16 16">
            <ellipse cx="8" cy="8" rx="7.500" ry="8" fill="#c81a17" />
            <ellipse cx="8" cy="8" rx="2.500" ry="5.500" fill="#a9a9ac" />
            <path d="M2 4c2-3 4-4 6-4" stroke="#f4827c" fill="none" />
          </svg>
        </button>
        <button aria-label="Проводник" className={`ml-1 flex w-[35px] items-center justify-center rounded-[2px] border ${dark}`}>
          <svg className="size-4" viewBox="0 0 16 16">
            <path d="M0 2h6l2 2h8v11H0z" fill="#e9ce76" />
            <path d="M1 5h14v9H1z" fill="#f9eaac" />
            <path d="M3 16V8h10v8h-3v-4H6v4z" fill="#64b4e6" />
          </svg>
        </button>
        <span className="ml-0.5 w-1 border-x border-[#55555f]" />
        <button aria-label="Окно" className="mr-[1px] flex w-[50px] items-center justify-center">
          <svg className="h-3 w-4" viewBox="0 0 16 12">
            <path d="M3 0h13l-2 12H1z" fill="#e8f0ff" />
            <path d="M3 0h13v2H3z" fill="#3f7be2" />
            <path d="M6 4h7l-1 5H5z" fill="#fff" stroke="#2459c4" strokeWidth="1.500" />
            <path d="M0 4h3M0 7h3M0 10h3" stroke="#3f7be2" />
          </svg>
        </button>
      </div>
      <div className="flex gap-[3px]">
        {tasks.map((task) => (
          <button
            key={task.name}
            aria-label={task.name}
            className={`flex w-[43px] shrink-0 items-center justify-center rounded-[2px] border outline outline-black/50 ${task.look}`}
          >
            {task.icon}
          </button>
        ))}
      </div>
      <div className="ml-auto flex items-center gap-2">
        <svg className="mr-1 h-1.5 w-2.5" viewBox="0 0 10 6">
          <path d="M1 5.500h8L5 1z" fill="#fff" stroke="#666" strokeWidth="0.800" />
        </svg>
        <svg className="size-4" viewBox="0 0 16 16" fill="#fff" stroke="#4c4c4c">
          <path d="M0.500 1v14.500h2V1zM2.500 2.500h6v2h6l-2 5h-5V8h-5z" />
        </svg>
        <svg className="size-4" viewBox="0 0 16 16" fill="#fff" stroke="#4c4c4c">
          <path d="M4.500 3.500h11v9h-11zM7 13h6v2.500H7z" />
          <path d="M6.500 5.500h7v5h-7z" fill="#a4a4a4" />
          <path d="M0.500 0.500h4v4h-4zM2 5h2v8H2z" />
        </svg>
        <svg className="size-4" viewBox="0 0 16 16" fill="#fff" stroke="#4c4c4c">
          <path d="M0.500 5.500h3l4-4v13l-4-4h-3z" />
          <path d="M9.500 5.500q2 2.500 0 5M11.500 3.500q3.500 4.500 0 9M13.500 2q4 6 0 12" fill="none" />
        </svg>
      </div>
      <time className="ml-[33px] self-center font-['Roboto'] text-[12px] text-white">16:26</time>
      <button
        aria-label="Показать рабочий стол"
        className="mr-px ml-[25px] w-[14px] border border-[#77777e] bg-gradient-to-b from-[#66666e] to-[#24222d]"
      />
    </footer>
  );
}

export default function App() {
  return (
    <div className="flex min-h-screen flex-col bg-[#c0c0c0] font-['Liberation_Sans',sans-serif]">
      <TabBar />
      <Toolbar />
      <div className="flex-1 overflow-hidden pt-6 pr-[140px] pb-10 pl-40">
        <SiteHeader />
        <Panel />
      </div>
      <StatusBar />
      <TaskBar />
    </div>
  );
}
